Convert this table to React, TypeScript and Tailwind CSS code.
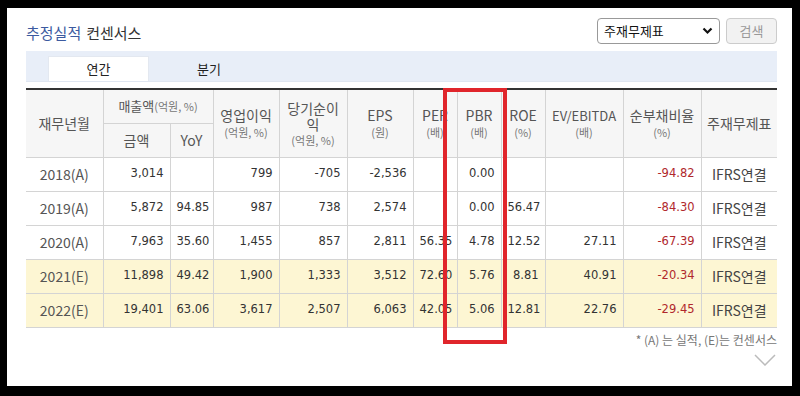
import React from "react";

type Row = {
  period: string;
  sales: string;
  yoy: string;
  op: string;
  net: string;
  eps: string;
  per: string;
  pbr: string;
  roe: string;
  ev: string;
  debt: string;
  est: boolean;
};

const ROWS: Row[] = [
  { period: "2018(A)", sales: "3,014", yoy: "", op: "799", net: "-705", eps: "-2,536", per: "", pbr: "0.00", roe: "", ev: "", debt: "-94.82", est: false },
  { period: "2019(A)", sales: "5,872", yoy: "94.85", op: "987", net: "738", eps: "2,574", per: "", pbr: "0.00", roe: "56.47", ev: "", debt: "-84.30", est: false },
  { period: "2020(A)", sales: "7,963", yoy: "35.60", op: "1,455", net: "857", eps: "2,811", per: "56.35", pbr: "4.78", roe: "12.52", ev: "27.11", debt: "-67.39", est: false },
  { period: "2021(E)", sales: "11,898", yoy: "49.42", op: "1,900", net: "1,333", eps: "3,512", per: "72.60", pbr: "5.76", roe: "8.81", ev: "40.91", debt: "-20.34", est: true },
  { period: "2022(E)", sales: "19,401", yoy: "63.06", op: "3,617", net: "2,507", eps: "6,063", per: "42.05", pbr: "5.06", roe: "12.81", ev: "22.76", debt: "-29.45", est: true },
];

const KR = { fontFamily: '"Noto Sans CJK KR", "Noto Sans", sans-serif' };
const NUM = { fontFamily: '"DejaVu Sans", "Liberation Sans", sans-serif' };

const th = "border border-[#d4d4d4] bg-[#f6f6f6] p-0 text-center align-middle font-normal text-[13px] leading-[16px] text-[#555]";
const td = "border border-[#d4d4d4] px-[6px] text-right text-[11.5px] text-[#333]";

function Unit({ children }: { children: React.ReactNode }) {
  return <div className="mt-[2px] text-[11px] leading-[13px] text-[#777]">{children}</div>;
}

export default function App() {
  return (
    <div className="h-[396px] w-[800px] bg-black pl-[7px] pt-[8px]" style={KR}>
      <div className="relative h-[378px] w-[785px] bg-white pl-[19px] pr-[15px]">
        <div className="flex h-[36px] items-end justify-between">
          <div className="pb-[1px] text-[15px] leading-[20px]">
            <span className="text-[#3c5aa0]">추정실적</span>
            <span className="ml-[5px] text-[#333]">컨센서스</span>
          </div>
          <div className="flex gap-[6px]">
            <div className="flex h-[26px] w-[123px] items-center justify-between rounded-[4px] border border-[#999] px-[6px] text-[13px] text-[#111]">
              <span>주재무제표</span>
              <svg width="11" height="8" viewBox="0 0 11 8">
                <polyline points="1.5,1.5 5.5,5.5 9.5,1.5" fill="none" stroke="#111" strokeWidth="2.2" />
              </svg>
            </div>
            <div className="flex h-[26px] w-[51px] items-center justify-center rounded-[4px] border border-[#ccc] bg-[#f2f2f2] text-[13px] text-[#999]">
              검색
            </div>
          </div>
        </div>

        <div className="mt-[7px] flex h-[31px] items-end border-b border-[#dfe6f1] bg-[#e8eef8] pl-[22px]">
          <div className="flex h-[25px] w-[101px] items-center justify-center border border-b-0 border-[#e3e8f0] bg-white text-[13px] text-[#222]">
            연간
          </div>
          <div className="flex h-[25px] w-[120px] items-center justify-center text-[13px] text-[#222]">
            분기
          </div>
        </div>

        <table className="mt-[6px] w-[751px] table-fixed border-collapse border-t-2 border-t-[#333]">
          <colgroup>
            <col className="w-[77px]" />
            <col className="w-[67px]" />
            <col className="w-[43px]" />
            <col className="w-[66px]" />
            <col className="w-[68px]" />
            <col className="w-[66px]" />
            <col className="w-[44px]" />
            <col className="w-[44px]" />
            <col className="w-[44px]" />
            <col className="w-[78px]" />
            <col className="w-[78px]" />
            <col className="w-[76px]" />
          </colgroup>
          <thead>
            <tr className="h-[34px]">
              <th rowSpan={2} className={`${th} border-l-0 text-[14px]`}>재무년월</th>
              <th colSpan={2} className={th}>
                매출액<span className="text-[11px] text-[#777]">(억원, %)</span>
              </th>
              <th rowSpan={2} className={th}>
                <div className="text-[14px] leading-[17px]">영업이익</div>
                <Unit>(억원, %)</Unit>
              </th>
              <th rowSpan={2} className={th}>
                <div className="text-[14px] leading-[16px]">당기순이<br />익</div>
                <Unit>(억원, %)</Unit>
              </th>
              <th rowSpan={2} className={th}>
                <div className="text-[14px] leading-[17px]">EPS</div>
                <Unit>(원)</Unit>
              </th>
              <th rowSpan={2} className={th}>
                <div className="text-[14px] leading-[17px]">PER</div>
                <Unit>(배)</Unit>
              </th>
              <th rowSpan={2} className={th}>
                <div className="text-[14px] leading-[17px]">PBR</div>
                <Unit>(배)</Unit>
              </th>
              <th rowSpan={2} className={th}>
                <div className="text-[14px] leading-[17px]">ROE</div>
                <Unit>(%)</Unit>
              </th>
              <th rowSpan={2} className={th}>
                <div className="text-[13px] leading-[17px]">EV/EBITDA</div>
                <Unit>(배)</Unit>
              </th>
              <th rowSpan={2} className={th}>
                <div className="text-[14px] leading-[17px]">순부채비율</div>
                <Unit>(%)</Unit>
              </th>
              <th rowSpan={2} className={`${th} border-r-0 text-[14px]`}>주재무제표</th>
            </tr>
            <tr className="h-[34px]">
              <th className={`${th} text-[14px]`}>금액</th>
              <th className={`${th} text-[14px]`}>YoY</th>
            </tr>
          </thead>
          <tbody>
            {ROWS.map((r) => (
              <tr key={r.period} className={`h-[34px] ${r.est ? "bg-[#fdf6d3]" : "bg-white"}`}>
                <td className="border border-l-0 border-[#d4d4d4] text-center text-[14px] text-[#555]">{r.period}</td>
                <td className={td} style={NUM}>{r.sales}</td>
                <td className={`${td} text-[#111]`} style={NUM}>{r.yoy}</td>
                <td className={td} style={NUM}>{r.op}</td>
                <td className={td} style={NUM}>{r.net}</td>
                <td className={td} style={NUM}>{r.eps}</td>
                <td className={td} style={NUM}>{r.per}</td>
                <td className={td} style={NUM}>{r.pbr}</td>
                <td className={td} style={NUM}>{r.roe}</td>
                <td className={td} style={NUM}>{r.ev}</td>
                <td className={`${td} text-[#b0282c]`} style={NUM}>{r.debt}</td>
                <td className="border border-r-0 border-[#d4d4d4] text-center text-[14px] text-[#444]">IFRS연결</td>
              </tr>
            ))}
          </tbody>
        </table>

        <div className="mt-[4px] text-right text-[12px] leading-[16px] text-[#777]">* (A) 는 실적, (E)는 컨센서스</div>
        <div className="mt-[6px] flex justify-end pr-[1px]">
          <svg width="22" height="12" viewBox="0 0 22 12">
            <polyline points="1,1 11,11 21,1" fill="none" stroke="#bbb" strokeWidth="1.5" />
          </svg>
        </div>

        <div className="absolute left-[436px] top-[80px] h-[256px] w-[64px] border-4 border-[#e0252b]" />
      </div>
    </div>
  );
}
